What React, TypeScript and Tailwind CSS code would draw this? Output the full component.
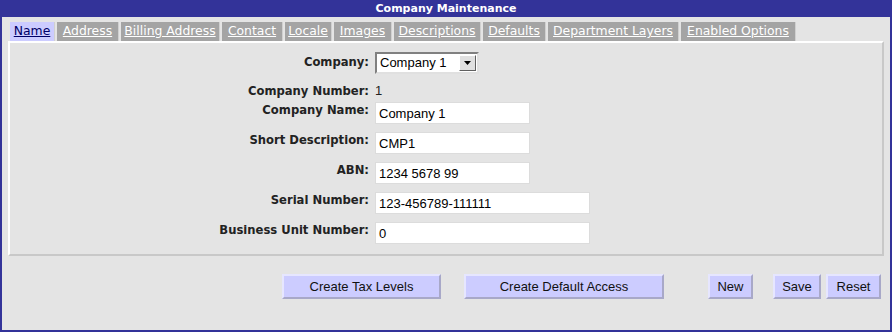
import React from "react";

const tabs = [
  { label: "Name", w: "w-[45px]", active: true },
  { label: "Address", w: "w-[62px]" },
  { label: "Billing Address", w: "w-[99px]" },
  { label: "Contact", w: "w-[61px]" },
  { label: "Locale", w: "w-[47px]" },
  { label: "Images", w: "w-[58px]" },
  { label: "Descriptions", w: "w-[87px]" },
  { label: "Defaults", w: "w-[63px]" },
  { label: "Department Layers", w: "w-[131px]" },
  { label: "Enabled Options", w: "w-[115px]" },
];

function TextBox({ value, wide }: { value: string; wide?: boolean }) {
  return (
    <div
      className={`${wide ? "w-[215px]" : "w-[155px]"} h-[22px] bg-white border border-[#dcdcdc] pl-[3px] pt-[3px] text-[13px] leading-[16px] text-black font-['Liberation_Sans',Arial,sans-serif]`}
    >
      {value}
    </div>
  );
}

function Row({ label, children, className = "" }: { label: string; children: React.ReactNode; className?: string }) {
  return (
    <div className={`flex items-start ${className}`}>
      <div className="w-[365px] shrink-0 pr-[6px] text-right font-bold text-[11.6px] leading-[14px] text-[#222] pt-[1px]">
        {label}
      </div>
      {children}
    </div>
  );
}

function Btn({ children, w }: { children: React.ReactNode; w: string }) {
  return (
    <button
      className={`${w} h-[25px] bg-[#ccccff] border-2 border-t-[#e6e6ff] border-l-[#e6e6ff] border-r-[#a8a8c8] border-b-[#a8a8c8] text-[13px] text-[#111] font-['Liberation_Sans',Arial,sans-serif]`}
    >
      {children}
    </button>
  );
}

export default function App() {
  return (
    <div className="w-[892px] h-[332px] bg-white">
      <div className="w-[892px] h-[332px] border-2 border-[#333399] bg-[#e4e4e4] flex flex-col font-['DejaVu_Sans',Verdana,sans-serif]">
        {/* Title bar */}
        <div className="h-[17px] -mt-[2px] bg-[#333399] text-white text-[11px] font-bold leading-[17px] text-center">
          Company Maintenance
        </div>

        {/* Tabs */}
        <div className="flex mt-[5px] pl-[8px] h-[19px] gap-[2px]">
          {tabs.map((t) => (
            <div
              key={t.label}
              className={`${t.w} h-[19px] flex items-center justify-center text-[12.4px] underline border-r border-[#d0d0d0] ${
                t.active ? "bg-[#ccccff] text-[#000066]" : "bg-[#a4a4a4] text-white"
              }`}
            >
              {t.label}
            </div>
          ))}
        </div>

        {/* Panel */}
        <div className="mx-[6px] h-[215px] border-2 border-t-white border-l-white border-r-[#c8c8c8] border-b-[#c8c8c8] pt-[9px] flex flex-col">
          <Row label="Company:" className="pt-[2px]">
            <div className="w-[104px] h-[22px] -mt-[2px] bg-white border-2 border-t-[#808080] border-l-[#808080] border-r-[#e0e0e0] border-b-[#e0e0e0] flex items-center font-['Liberation_Sans',Arial,sans-serif] text-[13px]">
              <span className="flex-1 pl-[3px]">Company 1</span>
              <div className="w-[17px] h-[16px] mr-[1px] bg-[#e0e0e0] border border-t-white border-l-white border-r-[#606060] border-b-[#606060] flex items-center justify-center">
                <svg width="7" height="4" viewBox="0 0 7 4">
                  <path d="M0 0h7L3.5 4z" fill="#000" />
                </svg>
              </div>
            </div>
          </Row>
          <Row label="Company Number:" className="mt-[9px]">
            <span className="text-[13px] leading-[14px] pt-[1px] font-['Liberation_Sans',Arial,sans-serif] text-[#222]">1</span>
          </Row>
          <Row label="Company Name:" className="mt-[4px]">
            <TextBox value="Company 1" />
          </Row>
          <Row label="Short Description:" className="mt-[8px]">
            <TextBox value="CMP1" />
          </Row>
          <Row label="ABN:" className="mt-[8px]">
            <TextBox value="1234 5678 99" />
          </Row>
          <Row label="Serial Number:" className="mt-[8px]">
            <TextBox value="123-456789-111111" wide />
          </Row>
          <Row label="Business Unit Number:" className="mt-[8px]">
            <TextBox value="0" wide />
          </Row>
        </div>

        {/* Buttons */}
        <div className="flex mt-[18px] pl-[280px]">
          <Btn w="w-[159px]">Create Tax Levels</Btn>
          <div className="w-[23px]" />
          <Btn w="w-[200px]">Create Default Access</Btn>
          <div className="w-[44px]" />
          <Btn w="w-[45px]">New</Btn>
          <div className="w-[20px]" />
          <Btn w="w-[48px]">Save</Btn>
          <div className="w-[5px]" />
          <Btn w="w-[55px]">Reset</Btn>
        </div>
      </div>
    </div>
  );
}
